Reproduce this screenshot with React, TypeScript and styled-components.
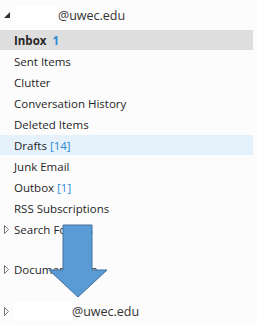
import React, { FC } from "react";
import styled, { createGlobalStyle } from "styled-components";

const GlobalStyle = createGlobalStyle`
  html, body {
    margin: 0;
    padding: 0;
    background: #fcfcfc;
  }
  body {
    font-family: "Open Sans", "Noto Sans", sans-serif;
    color: #262626;
  }
`;

const Pane = styled.div`
  position: relative;
  width: 257px;
  height: 325px;
  overflow: hidden;
  background: #fcfcfc;
`;

const AccountRow = styled.div<{ height: number }>`
  display: flex;
  align-items: center;
  height: ${(p) => p.height}px;
  padding-left: 4px;
  font-size: 12.5px;
  color: #333;
`;

const Redacted = styled.div<{ width: number; gap: number }>`
  width: ${(p) => p.width}px;
  height: 19px;
  background: #ffffff;
  margin-left: ${(p) => p.gap}px;
`;

const FolderRow = styled.div<{ selected?: "gray" | "blue" }>`
  display: flex;
  align-items: center;
  height: 20px;
  margin: 0 4px 1px 0;
  padding-left: 14px;
  font-size: 11.5px;
  background: ${(p) =>
    p.selected === "gray" ? "#dedede" : p.selected === "blue" ? "#e5f1fb" : "transparent"};
  font-weight: ${(p) => (p.selected === "gray" ? 700 : 400)};
`;

const ToggleRow = styled(FolderRow)`
  padding-left: 4px;
`;

const Count = styled.span<{ bold?: boolean }>`
  color: #2a8ad4;
  margin-left: ${(p) => (p.bold ? 6 : 3)}px;
`;

const Spacer = styled.div<{ h: number }>`
  height: ${(p) => p.h}px;
`;

const Arrow = styled.svg`
  position: absolute;
  left: 48px;
  top: 224px;
`;

const Expanded = () => (
  <svg width="6" height="6" viewBox="0 0 6 6">
    <polygon points="6,0 6,6 0,6" fill="#333" />
  </svg>
);

const Collapsed = () => (
  <svg width="5" height="9" viewBox="0 0 5 9" style={{ marginRight: 5 }}>
    <polygon points="0.5,0.5 4.5,4.5 0.5,8.5" fill="none" stroke="#777" strokeWidth="1" />
  </svg>
);

const folders: { name: string; count?: string; sel?: "gray" | "blue" }[] = [
  { name: "Inbox", count: "1", sel: "gray" },
  { name: "Sent Items" },
  { name: "Clutter" },
  { name: "Conversation History" },
  { name: "Deleted Items" },
  { name: "Drafts", count: "[14]", sel: "blue" },
  { name: "Junk Email" },
  { name: "Outbox", count: "[1]" },
  { name: "RSS Subscriptions" },
];

const App: FC = () => {
  return (
    <>
      <GlobalStyle />
      <Pane>
        <AccountRow height={30}>
          <Expanded />
          <Redacted width={45} gap={3} />
          <span>@uwec.edu</span>
        </AccountRow>
        {folders.map((f) => (
          <FolderRow key={f.name} selected={f.sel}>
            {f.name}
            {f.count && <Count bold={f.sel === "gray"}>{f.count}</Count>}
          </FolderRow>
        ))}
        <ToggleRow>
          <Collapsed />
          Search Folders
        </ToggleRow>
        <Spacer h={19} />
        <ToggleRow>
          <Collapsed />
          Documentation
        </ToggleRow>
        <Spacer h={21} />
        <AccountRow height={21}>
          <Collapsed />
          <Redacted width={58} gap={0} />
          <span>@uwec.edu</span>
        </AccountRow>
        <Arrow width="60" height="75" viewBox="0 0 60 75">
          <polygon
            points="15,1 44,1 44,46 59,46 30,73 1,46 15,46"
            fill="#5b9bd5"
            stroke="#41719c"
            strokeWidth="1"
          />
        </Arrow>
      </Pane>
    </>
  );
};

export default App;
